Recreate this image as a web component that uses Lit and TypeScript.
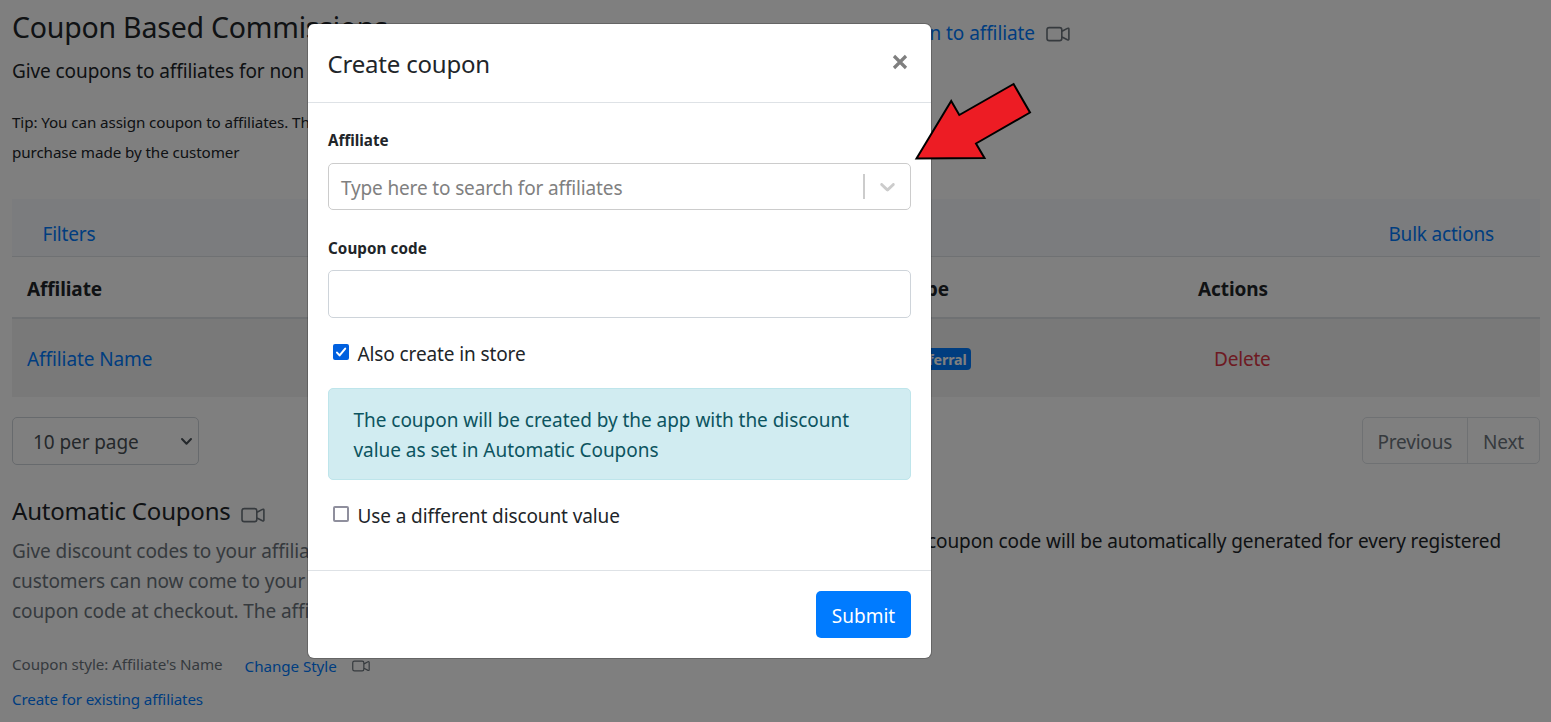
import { LitElement, html, css } from "lit";
import { customElement, property } from "lit/decorators.js";

@customElement("video-icon")
class VideoIcon extends LitElement {
  @property({ type: Boolean, reflect: true }) small = false;
  static styles = css`
    :host { display: block; flex: none; width: 24px; height: 16px; }
    :host([small]) { width: 18px; height: 12px; }
    svg { display: block; width: 100%; height: 100%; }
  `;
  render() {
    return html`<svg viewBox="0 0 24 16" fill="none" stroke="#6c757d" stroke-width="1.6" stroke-linejoin="round">
      <rect x="1" y="1.6" width="14.8" height="13" rx="2.2"></rect>
      <path d="M16 5.2 L21.4 2.4 Q22.9 1.8 22.9 3.2 V13 Q22.9 14.4 21.4 13.8 L16 11"></path>
    </svg>`;
  }
}

@customElement("coupon-modal")
class CouponModal extends LitElement {
  static styles = css`
    :host { display: block; box-sizing: border-box; width: 623px; height: 634px; background: #fff;
      border-radius: 6px; box-shadow: 0 0 0 1px rgba(0,0,0,.2); color: #212529;
      font-size: 19px; line-height: 30px; letter-spacing: -0.11px; }
    * { box-sizing: border-box; }
    .head { display: flex; justify-content: space-between; align-items: center; height: 79px;
      padding: 0 23px 0 19.5px; border-bottom: 1px solid #dee2e6; }
    .title { font-size: 24px; letter-spacing: -0.2px; padding-top: 2px; }
    .close { width: 16px; height: 16px; margin-top: -2px; display: block; }
    .body { display: flex; flex-direction: column; height: 467px; padding: 22px 20px 0; }
    .label { font-size: 15.2px; font-weight: 700; letter-spacing: 0; }
    .select { display: flex; align-items: center; height: 47px; margin-top: 8px; padding: 0 10px 0 12px;
      border: 1px solid #ccc; border-radius: 5px; color: #808080; }
    .ph { flex: 1; padding-top: 2px; letter-spacing: -0.15px; }
    .sep { width: 2px; height: 25px; background: #ccc; margin-right: 10px; }
    .chev { width: 25px; height: 25px; fill: #ccc; }
    .second { margin-top: 23px; letter-spacing: 0.08px; }
    .input { height: 48px; margin-top: 7px; border: 1px solid #ced4da; border-radius: 5px; }
    .check { display: flex; align-items: center; gap: 8.5px; height: 30px; padding-left: 5px; }
    .first { margin-top: 21px; }
    .box { width: 16px; height: 16px; flex: none; border-radius: 2px; margin-top: -4px; }
    .off { border: 2px solid #8f8f9d; }
    .on { background: #0060df; }
    .box svg { display: block; width: 16px; height: 16px; }
    .alert { height: 92px; margin: 19px 0 21px; padding: 16px 24.5px; border: 1px solid #bee5eb; border-radius: 5px;
      background: #d1ecf1; color: #0c5460; white-space: nowrap; letter-spacing: -0.04px; }
    .foot { display: flex; justify-content: flex-end; padding: 20px; border-top: 1px solid #dee2e6; }
    .btn { width: 95px; height: 47px; border: 0; border-radius: 5px; background: #007bff; color: #fff;
      font: inherit; letter-spacing: 0; padding: 3px 0 0; }
  `;
  render() {
    return html`
      <div class="head">
        <div class="title">Create coupon</div>
        <svg class="close" viewBox="0 0 16 16" stroke="#7f7f7f" stroke-width="3.2"><path d="M2 2 L14 14 M14 2 L2 14"></path></svg>
      </div>
      <div class="body">
        <div class="label">Affiliate</div>
        <div class="select">
          <span class="ph">Type here to search for affiliates</span>
          <span class="sep"></span>
          <svg class="chev" viewBox="0 0 20 20"><path d="M4.516 7.548c0.436-0.446 1.043-0.481 1.576 0l3.908 3.747 3.908-3.747c0.533-0.481 1.141-0.446 1.574 0 0.436 0.445 0.408 1.197 0 1.615-0.406 0.418-4.695 4.502-4.695 4.502-0.217 0.223-0.502 0.335-0.787 0.335s-0.57-0.112-0.789-0.335c0 0-4.287-4.084-4.695-4.502s-0.436-1.17 0-1.615z"></path></svg>
        </div>
        <div class="label second">Coupon code</div>
        <div class="input"></div>
        <div class="check first">
          <span class="box on"><svg viewBox="0 0 16 16" fill="none" stroke="#fff" stroke-width="2" stroke-linecap="round" stroke-linejoin="round"><path d="M4 8.6 L6.6 11.4 L12.2 4.6"></path></svg></span>
          <span>Also create in store</span>
        </div>
        <div class="alert">The coupon will be created by the app with the discount<br>value as set in Automatic Coupons</div>
        <div class="check"><span class="box off"></span><span>Use a different discount value</span></div>
      </div>
      <div class="foot"><button class="btn">Submit</button></div>`;
  }
}

@customElement("app-root")
class AppRoot extends LitElement {
  static styles = css`
    :host { display: block; position: relative; width: 100%; height: 722px; overflow: hidden; background: #fff;
      font-family: "Noto Sans", sans-serif; font-size: 19px; line-height: 30px; letter-spacing: -0.09px; color: #212529; }
    * { box-sizing: border-box; }
    .page { padding: 9px 11px 0 12px; white-space: nowrap; }
    .top { display: flex; justify-content: space-between; align-items: flex-start; height: 190px; }
    .h1 { font-size: 28.5px; line-height: 36px; letter-spacing: -0.22px; font-weight: 400; margin: 0 0 11px; }
    .tip { font-size: 15.2px; margin-top: 21px; }
    .assign { display: flex; align-items: center; gap: 11px; padding: 9px 470px 0 0; }
    .assign video-icon { margin-top: 2px; }
    .link { color: #007bff; }
    .bar { display: flex; justify-content: space-between; height: 58px; padding: 20px 46px 0 30.5px;
      background: #f6f9fc; border-bottom: 1px solid #dee2e6; }
    .short { letter-spacing: -0.2px; }
    .row { display: grid; grid-template-columns: 877.5px 293.5px 1fr; align-items: center; }
    .row > div { padding-left: 15px; }
    .thead { height: 62px; font-weight: 700; border-bottom: 2px solid #dee2e6; padding-top: 3px; }
    .trow { height: 78px; background: #f2f2f2; padding-top: 2px; }
    .badge { display: block; height: 22px; line-height: 23px; padding: 0 6px; border-radius: 4px; background: #007bff;
      color: #fff; font-size: 14.25px; font-weight: 700; width: 66px; text-align: right; letter-spacing: -0.12px; }
    .row > .del { color: #dc3545; padding-left: 31px; letter-spacing: -0.2px; }
    .pager { display: flex; justify-content: space-between; align-items: flex-start; margin-top: 20px; height: 79px; }
    .per { display: flex; align-items: center; justify-content: space-between; width: 187px; height: 48px; padding: 1px 5px 0 20px;
      border: 1px solid #ced4da; border-radius: 5px; color: #495057; }
    .per svg { width: 13px; height: 9px; margin-top: -1px; display: block; }
    .pages { display: flex; height: 47px; border: 1px solid #dee2e6; border-radius: 5px; color: #6c757d; letter-spacing: -0.2px; }
    .pages span { padding: 9px 15px 0; }
    .pages .next { border-left: 1px solid #dee2e6; }
    .auto { display: flex; justify-content: space-between; }
    .h2 { display: flex; align-items: center; gap: 10px; height: 30px; font-size: 24px; letter-spacing: -0.2px; }
    .h2 video-icon { margin-top: 7px; }
    .muted { color: #6c757d; }
    .para { margin-top: 10px; }
    .style { display: flex; align-items: center; height: 30px; font-size: 15.2px; margin-top: 23px; letter-spacing: -0.06px; }
    .change { margin: 4px 15px 0 22px; }
    .style video-icon { margin-top: 4px; }
    .create { font-size: 15.2px; margin-top: 5px; letter-spacing: -0.15px; }
    .note { padding: 30px 39px 0 0; }
    .backdrop { position: absolute; inset: 0; background: rgba(0,0,0,.5); }
    coupon-modal { position: absolute; left: 308px; top: 24px; }
    .arrow { position: absolute; left: 905px; top: 75px; width: 140px; height: 95px; }
  `;
  render() {
    return html`
      <div class="page">
        <div class="top">
          <div>
            <h1 class="h1">Coupon Based Commissions</h1>
            <div>Give coupons to affiliates for non</div>
            <div class="tip">Tip: You can assign coupon to affiliates. The<br>purchase made by the customer</div>
          </div>
          <div class="assign"><span class="link">Assign coupon to affiliate</span><video-icon></video-icon></div>
        </div>
        <div class="bar"><span class="link short">Filters</span><span class="link short">Bulk actions</span></div>
        <div class="row thead"><div>Affiliate</div><div>Type</div><div>Actions</div></div>
        <div class="row trow"><div class="link">Affiliate Name</div><div><span class="badge">Referral</span></div><div class="del">Delete</div></div>
        <div class="pager">
          <div class="per"><span>10 per page</span>
            <svg viewBox="0 0 13 9" fill="none" stroke="#495057" stroke-width="2" stroke-linecap="round" stroke-linejoin="round"><path d="M2 2 L6.5 6.8 L11 2"></path></svg>
          </div>
          <div class="pages"><span>Previous</span><span class="next">Next</span></div>
        </div>
        <div class="auto">
          <div>
            <div class="h2">Automatic Coupons<video-icon></video-icon></div>
            <div class="muted para">Give discount codes to your affiliates.<br>customers can now come to your<br>coupon code at checkout. The affiliate</div>
            <div class="style"><span class="muted">Coupon style: Affiliate's Name</span><span class="link change">Change Style</span><video-icon small></video-icon></div>
            <div class="link create">Create for existing affiliates</div>
          </div>
          <div class="note">If enabled, a coupon code will be automatically generated for every registered</div>
        </div>
      </div>
      <div class="backdrop"></div>
      <coupon-modal></coupon-modal>
      <svg class="arrow" viewBox="905 75 140 95"><path d="M916.5 158.5 L951.2 101 L959.3 115 L1013.6 84 L1030 112.5 L976 143.5 L984.5 158 Z" fill="#ed1c24" stroke="#000" stroke-width="2"></path></svg>`;
  }
}
